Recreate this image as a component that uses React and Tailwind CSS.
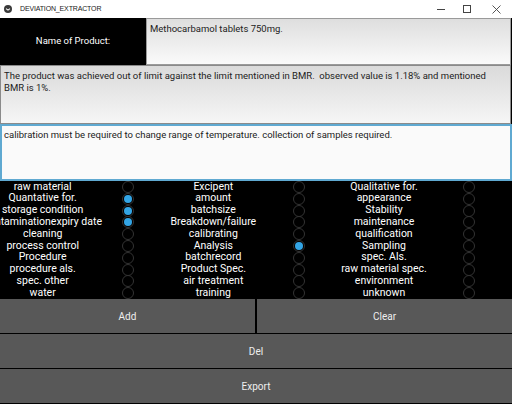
import React, { useState } from 'react';

const rows = [
  ['raw material', 'Excipent', 'Qualitative for.'],
  ['Quantative for.', 'amount', 'appearance'],
  ['storage condition', 'batchsize', 'Stability'],
  ['contaminationexpiry date', 'Breakdown/failure', 'maintenance'],
  ['cleaning', 'calibrating', 'qualification'],
  ['process control', 'Analysis', 'Sampling'],
  ['Procedure', 'batchrecord', 'spec. Als.'],
  ['procedure  als.', 'Product Spec.', 'raw material spec.'],
  ['spec. other', 'air treatment', 'environment'],
  ['water', 'training', 'unknown'],
];

const initialChecked = { '1-0': true, '2-0': true, '3-0': true, '5-1': true };

const Radio = ({ on, onClick }) => (
  <button onClick={onClick} className="flex items-center justify-center h-full w-full">
    <span className="w-[12px] h-[12px] rounded-full border border-[#333] flex items-center justify-center">
      {on && <span className="w-[8px] h-[8px] rounded-full bg-[#33a5e5]" />}
    </span>
  </button>
);

export default function App() {
  const [checked, setChecked] = useState(initialChecked);

  const toggle = (key) => setChecked((c) => ({ ...c, [key]: !c[key] }));

  return (
    <div className="w-[512px] h-[404px] bg-black flex flex-col overflow-hidden" style={{ fontFamily: 'Roboto, "Liberation Sans", sans-serif' }}>
      {/* title bar */}
      <div className="h-[18px] bg-white flex items-center shrink-0">
        <svg className="ml-[4px] w-[8px] h-[8px]" viewBox="0 0 10 10">
          <circle cx="5" cy="5" r="5" fill="#3a3a3a" />
          <path d="M2.5 4.5 L5 6.5 L7.5 4.5" stroke="#fff" strokeWidth="1.3" fill="none" />
        </svg>
        <span className="ml-[8px] text-[7px] tracking-[-0.15px] text-[#222]" style={{ fontFamily: '"Liberation Sans", sans-serif' }}>DEVIATION_EXTRACTOR</span>
        <div className="ml-auto flex items-center text-[#333]">
          <div className="w-[26px] flex justify-center"><span className="block w-[8px] h-px bg-[#444]" /></div>
          <div className="w-[26px] flex justify-center"><span className="block w-[8px] h-[8px] border border-[#444]" /></div>
          <div className="w-[32px] flex justify-center">
            <svg width="9" height="9" viewBox="0 0 9 9"><path d="M0.5 0.5 L8.5 8.5 M8.5 0.5 L0.5 8.5" stroke="#444" strokeWidth="0.9" /></svg>
          </div>
        </div>
      </div>

      {/* product name */}
      <div className="h-[47px] flex shrink-0">
        <div className="w-[146px] flex items-center justify-center text-white text-[9.5px]">Name of Product:</div>
        <div className="flex-1 mr-[1px] border border-[#9a9a9a] bg-gradient-to-b from-[#dedede] to-[#fafafa] px-[3px] pt-[3px] text-[9.5px] text-[#222]">
          Methocarbamol tablets 750mg.
        </div>
      </div>

      {/* observation */}
      <div className="h-[59px] mr-[1px] border border-[#8a8a8a] bg-gradient-to-b from-[#dadada] to-[#f6f6f6] px-[3px] pt-[4px] text-[9.5px] leading-[12px] text-[#222] shrink-0">
        The product was achieved out of limit against the limit mentioned in BMR.&nbsp; observed value is 1.18% and mentioned BMR is 1%.
      </div>

      {/* action */}
      <div className="h-[57px] border-2 border-[#5fa9d1] bg-[#fafafa] px-[2px] pt-[2px] text-[9.5px] text-[#222] shrink-0">
        calibration must be required to change range of temperature. collection of samples required.
      </div>

      {/* categories */}
      <div className="h-[118px] grid grid-cols-6 grid-rows-10 shrink-0">
        {rows.map((row, r) =>
          row.map((label, c) => (
            <React.Fragment key={`${r}-${c}`}>
              <div className="flex items-center justify-center text-white text-[10.5px] leading-none whitespace-nowrap min-w-0">
                {label}
              </div>
              <Radio on={!!checked[`${r}-${c}`]} onClick={() => toggle(`${r}-${c}`)} />
            </React.Fragment>
          ))
        )}
      </div>

      {/* buttons */}
      <div className="flex-1 flex flex-col gap-[1px]">
        <div className="flex gap-[2px] h-[34px]">
          <button className="flex-1 bg-[#585858] text-[#eee] text-[10px]">Add</button>
          <button className="flex-1 bg-[#585858] text-[#eee] text-[10px]">Clear</button>
        </div>
        <button className="h-[34px] bg-[#585858] text-[#eee] text-[10px]">Del</button>
        <button className="h-[34px] bg-[#585858] text-[#eee] text-[10px]">Export</button>
      </div>
    </div>
  );
}
